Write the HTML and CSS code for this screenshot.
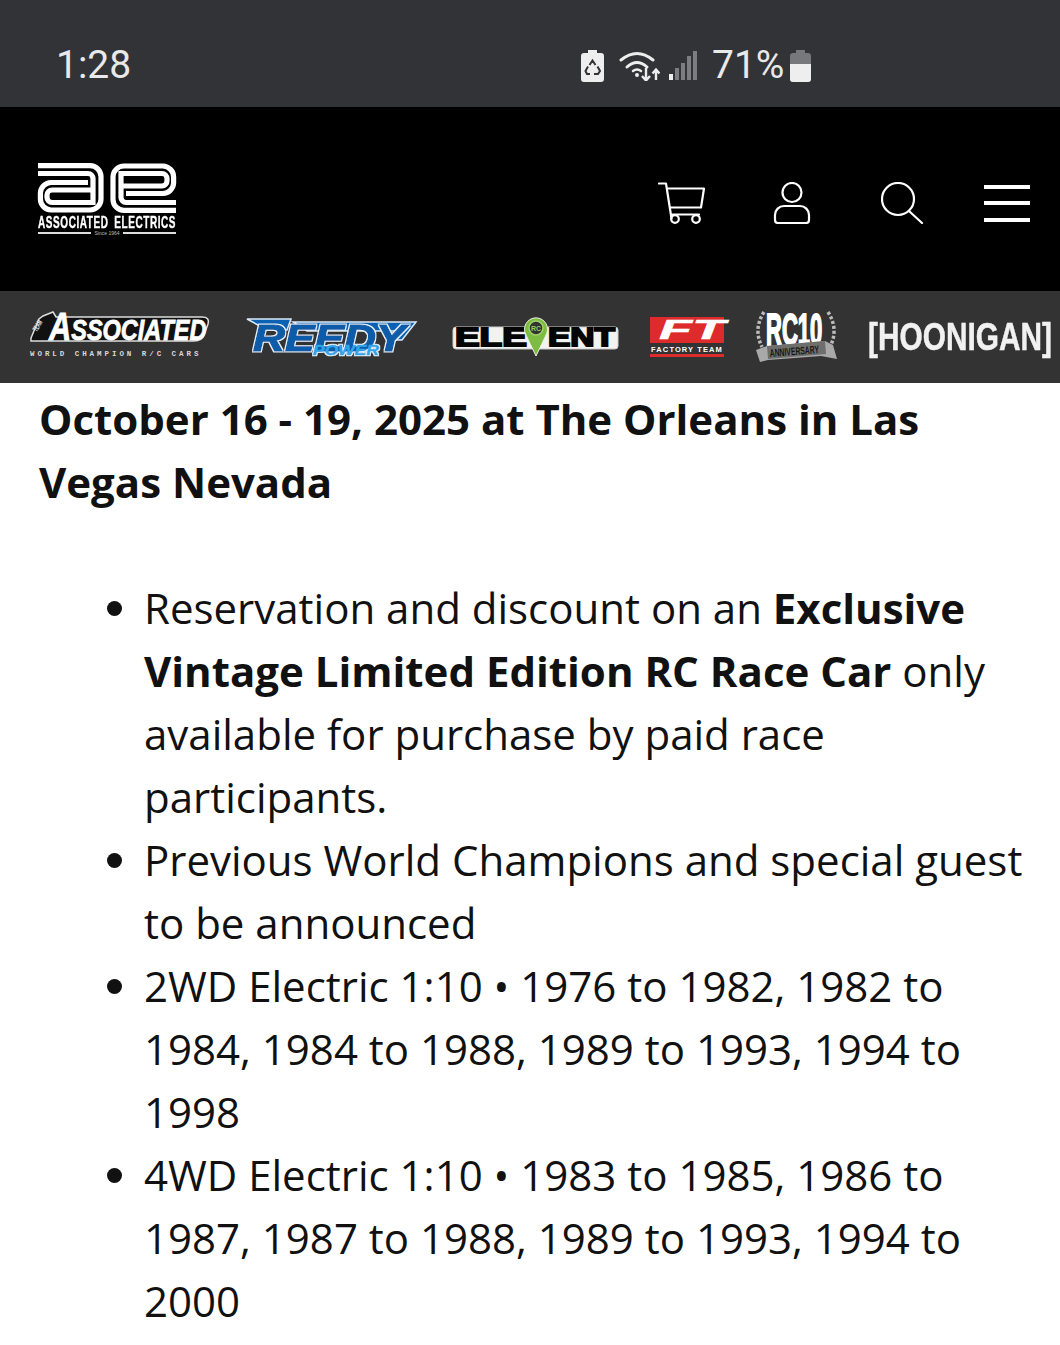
FILE: index.html
```html
<!DOCTYPE html>
<html lang="en">
<head>
<meta charset="utf-8">
<title>Associated Electrics</title>
<link rel="stylesheet" href="styles.css">
</head>
<body>
<div class="status">
  <span class="time">1:28</span>
  <div class="status-right">
    <svg class="s-rec" width="23" height="32" viewBox="0 0 23 32"><path d="M7 0h9v3h4a3 3 0 0 1 3 3v23a3 3 0 0 1-3 3H3a3 3 0 0 1-3-3V6a3 3 0 0 1 3-3h4z" fill="#eee"/><path d="M8.500 15l3-4.500 3 4.500M16.500 16.500l2.500 4.500-2 3h-4M9 24H6l-1.500-3 2.500-4.500" fill="none" stroke="#333" stroke-width="2"/></svg>
    <svg class="s-wifi" width="41" height="30" viewBox="0 0 41 30"><g fill="none" stroke="#eee" stroke-width="3" stroke-linecap="round"><path d="M2 9Q18-4 34 9"/><path d="M8 16Q18 7 28 16"/></g><path d="M14 20Q18 17 22 20" fill="none" stroke="#eee" stroke-width="2.500" stroke-linecap="round"/><circle cx="18" cy="24" r="2" fill="#eee"/><path d="M27 17V29M23 25l4 4.500 4-4.500M37 29V19M33.500 22.500l3.500-4 3.500 4" fill="none" stroke="#eee" stroke-width="2.400"/></svg>
    <svg class="s-sig" width="28" height="29" viewBox="0 0 28 29"><rect x="0" y="23" width="4" height="6" fill="#eee"/><rect x="6" y="17" width="4" height="12" fill="#7c7d80"/><rect x="12" y="12" width="4" height="17" fill="#7c7d80"/><rect x="18" y="5" width="4" height="24" fill="#7c7d80"/><rect x="24" y="0" width="4" height="29" fill="#7c7d80"/></svg>
    <span class="pct">71%</span>
    <svg width="21" height="32" viewBox="0 0 21 32"><path d="M6 0h9v3h3a3 3 0 0 1 3 3v23a3 3 0 0 1-3 3H3a3 3 0 0 1-3-3V6a3 3 0 0 1 3-3h3z" fill="#77787b"/><path d="M0 14h21v15a3 3 0 0 1-3 3H3a3 3 0 0 1-3-3z" fill="#eee"/></svg>
  </div>
</div>
<header class="top">
  <div class="ae">
    <svg class="ae-mark" width="138" height="50" viewBox="0 0 138 50" fill="none" stroke="#fff" stroke-width="5.200">
      <g id="ae-a">
        <path d="M0 2.600H52a11 11 0 0 1 11 11V36a11 11 0 0 1-11 11H13A11 11 0 0 1 2.400 36V30A11 11 0 0 1 13 19.500H50"/>
        <path d="M0 10.500H50a5 5 0 0 1 5 5V39.500H14a5 5 0 0 1-5-5V32a5 5 0 0 1 5-5H55"/>
      </g>
      <use href="#ae-a" transform="rotate(180 69 25)"/>
    </svg>
    <div class="ae-name">ASSOCIATED ELECTRICS</div>
    <div class="ae-since"><i></i><span>Since 1964</span><i></i></div>
  </div>
  <nav class="icons">
    <svg class="i-cart" width="47" height="42" viewBox="0 0 47 42" fill="none" stroke="#fff" stroke-width="2.200" stroke-linejoin="round" stroke-linecap="round"><path d="M1 1.500H8L13.500 36.500"/><path d="M9 6.500H46L43 25.500H12"/><path d="M13.500 32.500H41"/><circle cx="17" cy="37" r="3.800"/><circle cx="38" cy="37" r="3.800"/></svg>
    <svg class="i-user" width="38" height="42" viewBox="0 0 38 42" fill="none" stroke="#fff" stroke-width="2.200"><circle cx="19" cy="10.500" r="9.500"/><path d="M11 24H27a9 9 0 0 1 9 9v5a3 3 0 0 1-3 3H5a3 3 0 0 1-3-3V33a9 9 0 0 1 9-9z"/></svg>
    <svg class="i-search" width="44" height="42" viewBox="0 0 44 42" fill="none" stroke="#fff" stroke-width="2.200" stroke-linecap="round"><circle cx="17" cy="17" r="16"/><path d="M28 29L41 41"/></svg>
    <svg class="burger" width="46" height="37" viewBox="0 0 46 37" fill="#fff"><rect y="0" width="46" height="4"/><rect y="16" width="46" height="4"/><rect y="33" width="46" height="4"/></svg>
  </nav>
</header>
<div class="brands">
  <div class="b-assoc">
    <svg width="180" height="40" viewBox="0 0 180 40"><path d="M1 27L9 8 13 5 23 1 26 6H172Q180 6 178 13L174 24Q172 30 164 30H1z" fill="#111" stroke="#ddd" stroke-width="1.500"/><text transform="translate(7 21) rotate(-60) scale(.5 1)" class="assoc-tag">TEAM</text><text transform="translate(19 29) scale(.81 1)" class="assoc-t"><tspan class="assoc-a">A</tspan>SSOCIATED</text></svg>
    <div class="assoc-sub">WORLD CHAMPION R/C CARS</div>
  </div>
  <div class="b-reedy">
    <svg width="170" height="38" viewBox="0 0 170 38"><defs><linearGradient id="rg" gradientUnits="userSpaceOnUse" x1="0" y1="5" x2="0" y2="34"><stop offset="0" stop-color="#0b5ca9"/><stop offset="1" stop-color="#30a9ec"/></linearGradient><filter id="rim" x="-5%" y="-15%" width="110%" height="130%"><feMorphology in="SourceAlpha" operator="dilate" radius="1" result="d"/><feFlood flood-color="#e4f1fa" result="c"/><feComposite in="c" in2="d" operator="in" result="o"/><feMerge><feMergeNode in="o"/><feMergeNode in="SourceGraphic"/></feMerge></filter></defs><path d="M0 1H44L40 12H20z" fill="#0b62b4" stroke="#dbeaf7" stroke-width="1.500"/><path d="M46 4H169L155 22H150L152 13H60z" fill="#0b62b4" stroke="#dbeaf7" stroke-width="1.500"/><g filter="url(#rim)"><text transform="translate(6 33) scale(1.230 1)" class="reedy-t">REEDY</text><text transform="translate(66 37) scale(1.250 1)" class="reedy-s">POWER</text></g></svg>
  </div>
  <div class="b-element">
    <svg width="168" height="42" viewBox="0 0 168 42"><rect x="1" y="12" width="165" height="22" rx="3" fill="#f2f2f2" stroke="#ccc" stroke-width="1"/><text transform="translate(3 31) scale(1.420 1)" class="el-t">ELE</text><text transform="translate(96 31) scale(1.290 1)" class="el-t">ENT</text><path d="M84 41L74 20a11.500 11.500 0 1 1 20 0z" fill="#7dbb42" stroke="#e8f0df"/><circle cx="84" cy="13" r="7" fill="#333" stroke="#9fd267" stroke-width="1.500"/><text x="84" y="16" class="el-rc">RC</text></svg>
  </div>
  <div class="b-ft">
    <svg width="74" height="40" viewBox="0 0 74 40"><rect width="74" height="40" fill="#dd2a2b"/><text transform="translate(9 22) scale(2 1)" class="ft-mark">FT</text><rect y="26" width="74" height="11" fill="#333"/><text x="37" y="35" class="ft-name">FACTORY TEAM</text></svg>
  </div>
  <div class="b-rc">
    <svg width="82" height="54" viewBox="0 0 82 54"><g fill="none" stroke="#bbb" stroke-width="3.500" stroke-dasharray="3 2"><path d="M9 3Q-2 20 7 38"/><path d="M73 3Q84 20 75 38"/></g><text transform="translate(11 36) scale(.5 1)" class="rc-t">RC10</text><path d="M1 41L12 37 70 32 78 36 82 50 66 47 13 51 5 53z" fill="#a9a9a9"/><path d="M12 37L70 32 71 45 13 50z" fill="#6e6e6e"/><text transform="translate(15 48) rotate(-4.500) scale(.62 1)" class="rc-s">ANNIVERSARY</text></svg>
  </div>
  <div class="b-hoon">[HOONIGAN]</div>
</div>
<main class="content">
  <p class="lead">October 16 - 19, 2025 at The Orleans in Las Vegas Nevada</p>
  <ul class="list">
    <li>Reservation and discount on an <b>Exclusive Vintage Limited Edition RC Race Car</b> only available for purchase by paid race participants.</li>
    <li>Previous World Champions and special guest to be announced</li>
    <li>2WD Electric 1:10 • 1976 to 1982, 1982 to 1984, 1984 to 1988, 1989 to 1993, 1994 to 1998</li>
    <li>4WD Electric 1:10 • 1983 to 1985, 1986 to 1987, 1987 to 1988, 1989 to 1993, 1994 to 2000</li>
  </ul>
</main>
</body>
</html>
```
FILE: styles.css
```css
* { box-sizing: border-box; }
html, body { margin: 0; padding: 0; }
body { width: 1060px; height: 1345px; overflow: hidden; background: #fff; font-family: "Open Sans", sans-serif; color: #111; }
.status { height: 107px; background: #323337; display: flex; align-items: center; justify-content: space-between; padding: 23px 249px 0 56px; color: #e9e9ea; font-family: Roboto, sans-serif; }
.time { font-size: 39px; line-height: 46px; }
.status-right { display: flex; align-items: center; margin-top: 1px; }
.status-right svg { display: block; flex: none; }
.s-rec { margin-right: 15px; }
.s-wifi { margin-right: 9px; }
.s-sig { margin-right: 15px; }
.pct { width: 71px; font-size: 39px; line-height: 46px; margin-right: 7px; letter-spacing: 0; white-space: nowrap; margin-top: -2px; }
.top { height: 184px; background: #000; display: flex; align-items: center; justify-content: space-between; padding: 0 30px 0 38px; }
.ae { width: 138px; display: flex; flex-direction: column; }
.ae-mark { display: block; overflow: visible; }
.ae-name { font-family: "Liberation Sans", sans-serif; font-weight: 700; font-size: 17px; line-height: 14px; color: #fff; white-space: nowrap; letter-spacing: 1px; word-spacing: 4px; transform: scaleX(.587); transform-origin: left center; width: 235px; -webkit-text-stroke: .4px #fff; margin-top: 3px; }
.ae-since { display: flex; align-items: center; gap: 3px; height: 4px; margin-top: 1px; color: #bbb; font: 5px/4px "Liberation Sans", sans-serif; white-space: nowrap; }
.ae-since i { flex: 1; height: 2px; background: #ddd; }
.icons { display: flex; align-items: center; margin-top: 8px; }
.icons svg { display: block; flex: none; }
.i-cart { margin-right: 68px; }
.i-user { margin-right: 70px; }
.i-search { margin-right: 59px; }
.brands { height: 92px; background: #333; display: flex; align-items: center; padding: 0 0 0 30px; overflow: hidden; }
.brands > div { flex: none; }
.brands svg { display: block; overflow: visible; }
.b-assoc { width: 180px; margin-right: 37px; margin-top: -6px; }
.assoc-t { font: italic 700 29px "Liberation Sans", sans-serif; fill: #fff; stroke: #fff; stroke-width: .8px; }
.assoc-a { font-size: 38px; }
.assoc-tag { font: 700 8px "Liberation Sans", sans-serif; fill: #eee; }
.assoc-sub { font: 700 7.500px/8px "Liberation Mono", monospace; letter-spacing: 2.950px; color: #d8d8d8; white-space: nowrap; margin-top: -1px; }
.b-reedy { margin-right: 35px; margin-top: -1px; }
.reedy-t { font: italic 700 36px "Liberation Sans", sans-serif; fill: url(#rg); stroke: url(#rg); stroke-width: 1.200px; }
.reedy-s { font: italic 700 14px "Liberation Sans", sans-serif; fill: #2fa5ea; stroke: #2fa5ea; stroke-width: .5px; }
.b-element { margin-right: 30px; margin-top: -2px; }
.el-t { font: 700 26px "Liberation Sans", sans-serif; fill: #050505; stroke: #050505; stroke-width: 1.800px; }
.el-rc { font: 700 7px "Liberation Sans", sans-serif; fill: #8fcf55; text-anchor: middle; }
.b-ft { margin-right: 31px; margin-top: -1px; }
.ft-mark { font: italic 700 27px "Liberation Sans", sans-serif; fill: #fff; stroke: #fff; stroke-width: .5px; }
.ft-name { font: 700 7.500px "Liberation Sans", sans-serif; letter-spacing: 1.100px; fill: #fff; text-anchor: middle; }
.b-rc { margin-right: 31px; margin-top: -3px; }
.rc-t { font: 700 44px "Liberation Sans", sans-serif; fill: #fff; stroke: #fff; stroke-width: 2px; }
.rc-s { font: 700 11px "Liberation Sans", sans-serif; fill: #161616; }
.b-hoon { font: 700 39px/46px "Liberation Sans", sans-serif; color: #f1f1f1; white-space: nowrap; transform: scaleX(.765); transform-origin: left center; width: 186px; -webkit-text-stroke: .5px #f1f1f1; }
.content { padding: 4px 0 0 39px; font-size: 42px; line-height: 63px; }
.lead { margin: 0 0 63px; font-weight: 700; width: 900px; }
.list { margin: 0; padding: 0 30px 0 105px; }
```
